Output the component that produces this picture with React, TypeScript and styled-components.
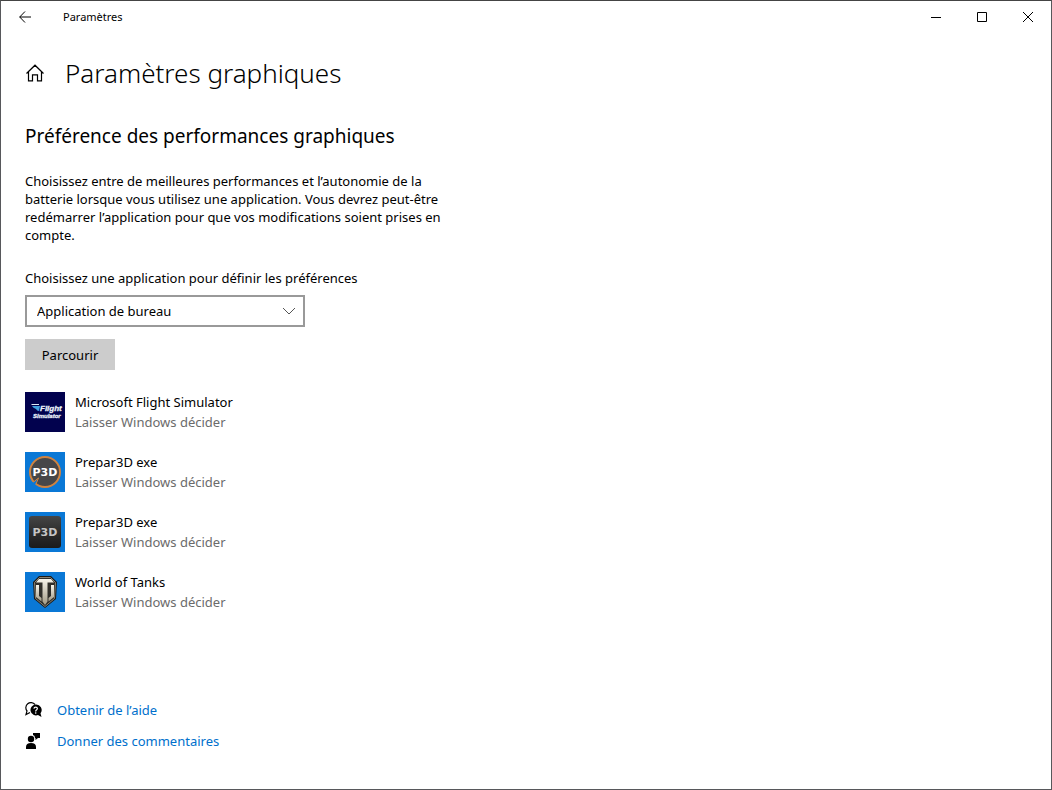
import React from "react";
import styled, { createGlobalStyle } from "styled-components";

const GlobalStyle = createGlobalStyle`
  *, *::before, *::after { box-sizing: border-box; }
  body {
    margin: 0;
    background: #fff;
    color: #000;
    font-family: "Noto Sans", "Open Sans", sans-serif;
    font-size: 13px;
    line-height: 20px;
  }
  button, select { font: inherit; color: inherit; }
  h1, h2, p, ul { margin: 0; padding: 0; }
`;

const Window = styled.div`
  display: flex;
  flex-direction: column;
  min-height: 100vh;
  border: 1px solid #57585b;
  border-top-color: #444;
`;

const TitleBar = styled.header`
  display: flex;
  align-items: center;
  height: 32px;
`;

const BarButton = styled.button<{ $width: number }>`
  display: flex;
  align-items: center;
  justify-content: center;
  width: ${(p) => p.$width}px;
  height: 32px;
  padding: 0;
  border: 0;
  background: transparent;
`;

const WindowTitle = styled.span`
  flex: 1;
  padding-left: 14px;
  font-size: 11px;
`;

const Content = styled.main`
  padding: 20px 24px 36px;
`;

const PageHeader = styled.div`
  display: flex;
  align-items: center;
  gap: 20px;
  height: 40px;
`;

const HomeButton = styled.button`
  display: flex;
  padding: 0;
  border: 0;
  background: transparent;
`;

const PageTitle = styled.h1`
  font-size: 26px;
  font-weight: 300;
  line-height: 40px;
`;

const SectionTitle = styled.h2`
  margin-top: 29px;
  font-size: 19px;
  font-weight: 400;
  line-height: 28px;
`;

const Description = styled.p`
  max-width: 430px;
  margin-top: 22px;
  line-height: 18px;
`;

const Field = styled.div`
  display: flex;
  flex-direction: column;
  align-items: flex-start;
  gap: 7px;
  margin-top: 24px;
`;

const SelectBox = styled.div`
  position: relative;
  width: 280px;
  max-width: 100%;

  svg {
    position: absolute;
    top: 12px;
    right: 9px;
    pointer-events: none;
  }
`;

const Select = styled.select`
  display: block;
  appearance: none;
  width: 100%;
  height: 32px;
  padding: 0 32px 0 10px;
  border: 2px solid #999;
  border-radius: 0;
  background: #fff;
`;

const BrowseButton = styled.button`
  width: 90px;
  height: 31px;
  margin-top: 12px;
  padding: 0;
  border: 0;
  background: #ccc;
`;

const AppList = styled.ul`
  display: flex;
  flex-direction: column;
  gap: 20px;
  margin-top: 22px;
  list-style: none;
`;

const AppItem = styled.li`
  display: flex;
  gap: 10px;

  svg { flex: none; }
`;

const AppPreference = styled.div`
  color: #6b6b6b;
`;

const HelpLinks = styled.nav`
  display: flex;
  flex-direction: column;
  align-items: flex-start;
  gap: 11px;
  margin-top: 88px;
`;

const HelpLink = styled.a`
  display: flex;
  align-items: center;
  gap: 15px;
  color: #0070cc;
  text-decoration: none;
`;

const logoFont = '"Liberation Sans", Arial, sans-serif';

const FlightLogo = () => (
  <svg width="40" height="40" viewBox="0 0 40 40" aria-hidden="true">
    <rect width="40" height="40" fill="#02024e" />
    <path d="M7 14l8 0-1 5q-2 0-3-2-3-1-4-3z" fill="#3f9fe0" />
    <path d="M6 12h8v1H7z" fill="#dce8f5" />
    <g fill="#fff" stroke="#dbe3f2" strokeWidth="0.300" fontFamily={logoFont} fontStyle="italic" fontWeight="700">
      <text x="15" y="19" fontSize="8">Flight</text>
      <text x="8" y="26" fontSize="6">Simulator</text>
    </g>
  </svg>
);

const P3DMark = ({ color }: { color: string }) => (
  <text
    x="20"
    y="24"
    textAnchor="middle"
    fill={color}
    fontFamily='"DejaVu Sans", sans-serif'
    fontWeight="700"
    fontSize="11"
  >
    P3D
  </text>
);

const PreparRoundLogo = () => (
  <svg width="40" height="40" viewBox="0 0 40 40" aria-hidden="true">
    <rect width="40" height="40" fill="#0a78d6" />
    <circle cx="20" cy="20" r="15" fill="#474749" stroke="#d0833f" strokeWidth="2" />
    <path d="M7 31l6-4-3 6z" fill="#0a78d6" />
    <path d="M8.500 30l5-4-2.500 6" fill="none" stroke="#d0833f" />
    <P3DMark color="#fff" />
  </svg>
);

const PreparSquareLogo = () => (
  <svg width="40" height="40" viewBox="0 0 40 40" aria-hidden="true">
    <defs>
      <linearGradient id="tile" x1="0" y1="0" x2="0" y2="1">
        <stop offset="0" stopColor="#454545" />
        <stop offset="0.6" stopColor="#292929" />
        <stop offset="1" stopColor="#1b1b1b" />
      </linearGradient>
    </defs>
    <rect width="40" height="40" fill="#0a78d6" />
    <rect x="4" y="4" width="32" height="32" rx="3" fill="url(#tile)" />
    <P3DMark color="#c4c4c4" />
  </svg>
);

const TanksLogo = () => (
  <svg width="40" height="40" viewBox="0 0 40 40" aria-hidden="true">
    <defs>
      <linearGradient id="steel" x1="0" y1="0" x2="0" y2="1">
        <stop offset="0" stopColor="#f6f3ea" />
        <stop offset="1" stopColor="#a29a86" />
      </linearGradient>
    </defs>
    <rect width="40" height="40" fill="#0a78d6" />
    <path d="M14 4h12l6 6-1 17-11 9-11-9L8 10z" fill="#1b1a18" />
    <path d="M14.500 5.500h11l5 5-1 16-9.500 8-9.500-8-1-16z" fill="#302e2a" stroke="#8b8373" />
    <path d="M14 7h12l3 3.500h-6.500v19L20 33l-2.500-3.500v-19H11z" fill="url(#steel)" />
    <path d="M11 13h3v11l2.500 2v3.500L11 25zM29 13h-3v11l-2.500 2v3.500L29 25z" fill="url(#steel)" />
  </svg>
);

const HelpIcon = () => (
  <svg width="17" height="16" viewBox="0 0 17 16" aria-hidden="true">
    <path d="M5 10.500L1 12.500l1-3.500A5 5 0 1 1 10 2.500" fill="none" stroke="#000" strokeWidth="1.200" />
    <path d="M10.500 2.500a5.500 5.500 0 1 0 2.500 10.600l3.500 2-1-3.800A5.500 5.500 0 0 0 10.500 2.500z" />
    <path d="M8.900 6.700q.2-1.500 1.800-1.500t1.700 1.400q0 .8-1 1.400-.7.500-.7 1.400" fill="none" stroke="#fff" strokeWidth="1.200" />
    <circle cx="10.700" cy="11" r="0.800" fill="#fff" />
  </svg>
);

const FeedbackIcon = () => (
  <svg width="17" height="16" viewBox="0 0 17 16" aria-hidden="true">
    <circle cx="6" cy="6" r="3.200" />
    <path d="M1 16v-2q0-4 5-4t5 4v2z" />
    <path d="M8 0h7v5h-2l-2.500 2V5H10Q10 2.500 8 2z" />
  </svg>
);

const apps = [
  { name: "Microsoft Flight Simulator", Logo: FlightLogo },
  { name: "Prepar3D exe", Logo: PreparRoundLogo },
  { name: "Prepar3D exe", Logo: PreparSquareLogo },
  { name: "World of Tanks", Logo: TanksLogo },
];

export default function App() {
  return (
    <>
      <GlobalStyle />
      <Window>
        <TitleBar>
          <BarButton $width={48} aria-label="Retour">
            <svg width="12" height="12" viewBox="0 0 12 12" fill="none" stroke="#000">
              <path d="M6 .5L.7 6 6 11.500M.7 6H12" />
            </svg>
          </BarButton>
          <WindowTitle>Paramètres</WindowTitle>
          <BarButton $width={46} aria-label="Réduire">
            <svg width="10" height="10" viewBox="0 0 10 10">
              <path d="M0 5h10v1H0z" />
            </svg>
          </BarButton>
          <BarButton $width={46} aria-label="Agrandir">
            <svg width="10" height="10" viewBox="0 0 10 10" fill="none" stroke="#000">
              <path d="M.5.5h9v9h-9z" />
            </svg>
          </BarButton>
          <BarButton $width={46} aria-label="Fermer">
            <svg width="10" height="10" viewBox="0 0 10 10" fill="none" stroke="#000">
              <path d="M0 0l10 10M10 0L0 10" />
            </svg>
          </BarButton>
        </TitleBar>
        <Content>
          <PageHeader>
            <HomeButton aria-label="Accueil">
              <svg width="20" height="18" viewBox="0 0 20 18" fill="none" stroke="#000" strokeWidth="1.200">
                <path d="M1.500 9.500L10 1.200l8.500 8.300M3.500 7.800v9.100h4v-6h5v6h4V7.800" />
              </svg>
            </HomeButton>
            <PageTitle>Paramètres graphiques</PageTitle>
          </PageHeader>
          <SectionTitle>Préférence des performances graphiques</SectionTitle>
          <Description>
            Choisissez entre de meilleures performances et l’autonomie de la batterie lorsque vous
            utilisez une application. Vous devrez peut-être redémarrer l’application pour que vos
            modifications soient prises en compte.
          </Description>
          <Field>
            <label htmlFor="app-type">Choisissez une application pour définir les préférences</label>
            <SelectBox>
              <Select id="app-type" defaultValue="desktop">
                <option value="desktop">Application de bureau</option>
              </Select>
              <svg width="14" height="8" viewBox="0 0 14 8" fill="none" stroke="#555">
                <path d="M1 1l6 6 6-6" />
              </svg>
            </SelectBox>
          </Field>
          <BrowseButton>Parcourir</BrowseButton>
          <AppList>
            {apps.map(({ name, Logo }, i) => (
              <AppItem key={i}>
                <Logo />
                <div>
                  <div>{name}</div>
                  <AppPreference>Laisser Windows décider</AppPreference>
                </div>
              </AppItem>
            ))}
          </AppList>
          <HelpLinks>
            <HelpLink href="#aide">
              <HelpIcon />
              Obtenir de l’aide
            </HelpLink>
            <HelpLink href="#commentaires">
              <FeedbackIcon />
              Donner des commentaires
            </HelpLink>
          </HelpLinks>
        </Content>
      </Window>
    </>
  );
}
